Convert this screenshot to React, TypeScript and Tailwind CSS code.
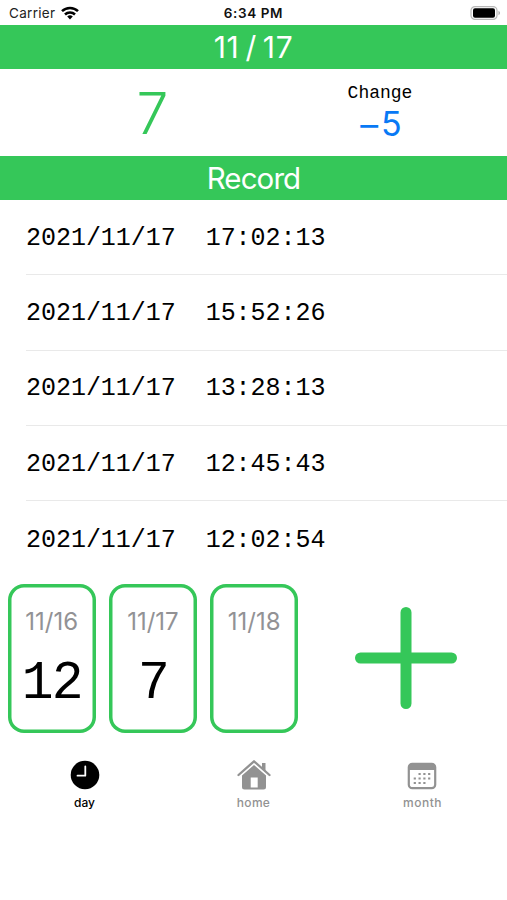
const records = ["17:02:13", "15:52:26", "13:28:13", "12:45:43", "12:02:54"];
const days = [
  { date: "11/16", count: "12" },
  { date: "11/17", count: "7" },
  { date: "11/18", count: "" },
];
const mono = "font-['Liberation_Mono','DejaVu_Sans_Mono',monospace]";

function StatusBar() {
  return (
    <header className="grid h-[25px] grid-cols-3 items-center pt-[3px] text-[13.5px] leading-none">
      <div className="flex items-center gap-[6px] pl-[9px] text-[#222]">
        <span className="tracking-[0.3px]">Carrier</span>
        <svg className="-mt-[3px]" width="18" height="14" viewBox="0 0 18 14" fill="none" stroke="#000" strokeWidth="2.5">
          <path d="M1 5.2a11.3 11.3 0 0 1 16 0" />
          <path d="M4 8.5a7.1 7.1 0 0 1 10 0" />
          <path d="M9 13.5 6.2 10.6a4 4 0 0 1 5.6 0Z" fill="#000" stroke="none" />
        </svg>
      </div>
      <span className="text-center font-semibold tracking-[0.6px] text-[#111]">6:34 PM</span>
      <div className="flex justify-end pr-[6px]">
        <svg className="-mt-[3px]" width="31" height="14" viewBox="0 0 31 14">
          <rect x="1" y=".6" width="26" height="12.800" rx="4" fill="#fff" stroke="#b8b8b8" strokeWidth="1.2" />
          <rect x="3" y="2.3" width="22" height="9.4" rx="2" />
          <path d="M28.5 4.8c2 .8 2 3.6 0 4.4Z" fill="#aaa" />
        </svg>
      </div>
    </header>
  );
}

function ClockIcon() {
  return (
    <svg width="30" height="30" viewBox="0 0 30 30">
      <circle cx="15" cy="15" r="14.3" />
      <path d="M15.3 6.5V15.7H7.5" fill="none" stroke="#fff" strokeWidth="1.8" strokeLinecap="round" strokeLinejoin="round" />
    </svg>
  );
}

function HomeIcon() {
  return (
    <svg width="34" height="32" viewBox="0 0 34 32" fill="#929292">
      <path d="M1.5 16 17 2.3 32.5 16" fill="none" stroke="#929292" strokeWidth="2.3" strokeLinecap="round" strokeLinejoin="round" />
      <path d="M25 4h3.5v9L25 10Z" />
      <path fillRule="evenodd" d="M17 6 29 16.6V28q0 2.500-2.500 2.500h-19Q5 30.500 5 28V16.600ZM13.700 18.500V28.500H20.700V18.500Z" />
    </svg>
  );
}

function CalendarIcon() {
  return (
    <svg className="-ml-px mt-px" width="30" height="28" viewBox="0 0 30 28">
      <rect x="1.8" y="1.8" width="26.4" height="24.400" rx="3.500" fill="#fff" stroke="#929292" strokeWidth="2.2" />
      <path d="M2 8V5q0-3 3-3h20q3 0 3 3v3Z" fill="#929292" />
      <path d="M11.500 12h2.200m2.600 0h2.200m2.600 0h2.200M6.700 16.500h2.200m2.600 0h2.200m2.600 0h2.200m2.600 0h2.200M6.700 21h2.200m2.600 0h2.200m2.600 0h2.200" stroke="#929292" strokeWidth="2" />
    </svg>
  );
}

export default function App() {
  return (
    <main className="flex h-[900px] w-full flex-col overflow-hidden bg-white font-['Inter',sans-serif] text-black">
      <StatusBar />
      <h1 className="flex h-11 items-center justify-center bg-[#35c759] pt-px text-[30px] font-normal tracking-[0.6px] [word-spacing:-3px] whitespace-pre text-white">11 / 17</h1>
      <section className="flex h-[87px]">
        <div className="w-[305px] pt-[14px] text-center text-[57px] leading-[62px] font-[350] text-[#35c759]">7</div>
        <div className="w-[150px] pt-[13px] text-center">
          <div className={`${mono} text-[18px] leading-[22px]`}>Change</div>
          <div className="flex items-center justify-center text-[34px] leading-[40px] font-normal text-[#0879f5]">
            <span className="inline-block scale-x-[1.15]">−</span><span>5</span>
          </div>
        </div>
      </section>
      <h2 className="flex h-11 items-center justify-center bg-[#35c759] pt-px text-[29.5px] font-normal tracking-[-0.9px] text-white">Record</h2>
      <ul className="h-[376px] pl-[26px]">
        {records.map((time) => (
          <li key={time} className={`${mono} flex h-[75.3px] items-center border-b border-[#e9e9e9] pt-[3px] text-[25px] tracking-[-0.03px] whitespace-pre last:border-0`}>
            {"2021/11/17  " + time}
          </li>
        ))}
      </ul>
      <section className="flex h-[164px] gap-[13px] pt-[7.5px] pl-[7.5px]">
        {days.map((day) => (
          <article key={day.date} className="flex h-[149px] w-[88.3px] flex-col items-center rounded-[16px] pt-[23px] shadow-[inset_0_0_0_3.5px_#35c759]">
            <div className="text-[24px] leading-[30px] font-normal text-[#929295]">{day.date}</div>
            <div className={`${mono} mt-[18px] text-[53px] leading-[58px] tracking-[-2px]`}>{day.count}</div>
          </article>
        ))}
        <div className="ml-[43px] pt-[22.5px]">
          <svg width="104" height="104" viewBox="0 0 104 104" stroke="#35c759" strokeWidth="11" strokeLinecap="round">
            <path d="M52 6.500v91M6.500 52h91" />
          </svg>
        </div>
      </section>
      <nav className="grid grid-cols-3 pt-[18px] text-[12px] leading-[16px] font-medium text-[#929292]">
        <div className="flex flex-col items-center gap-[3px] text-black"><div className="flex h-[34px] items-center"><ClockIcon /></div><span className="tracking-[0.1px]">day</span></div>
        <div className="flex flex-col items-center gap-[3px]"><div className="flex h-[34px] items-center"><HomeIcon /></div><span className="tracking-[0.3px]">home</span></div>
        <div className="flex flex-col items-center gap-[3px]"><div className="flex h-[34px] items-center"><CalendarIcon /></div><span className="tracking-[0.5px]">month</span></div>
      </nav>
    </main>
  );
}
